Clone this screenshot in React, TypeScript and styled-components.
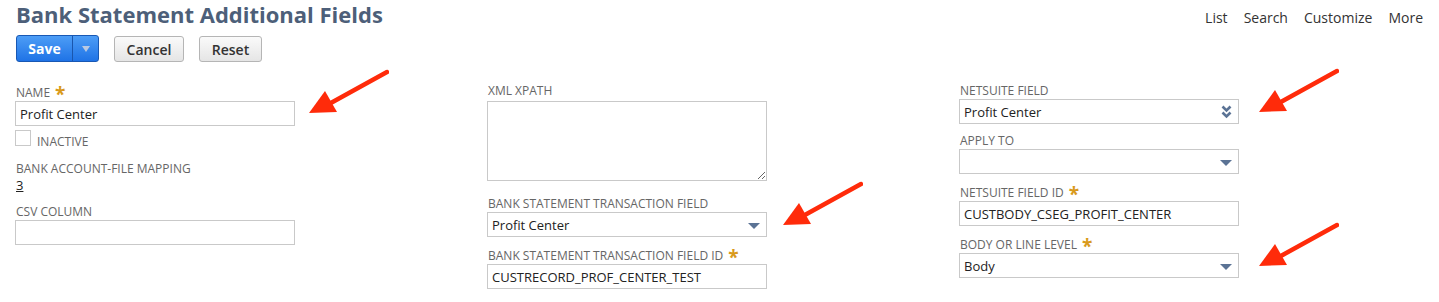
import styled, { createGlobalStyle } from "styled-components";

const GlobalStyle = createGlobalStyle`
  body {
    margin: 0;
    background: #fff;
    font-family: "Open Sans", "Liberation Sans", sans-serif;
    color: #333;
  }
`;

const Page = styled.div`
  position: relative;
  width: 1439px;
  height: 302px;
  padding: 0 16px 0 15px;
  box-sizing: border-box;
  overflow: hidden;
`;

const Header = styled.header`
  display: flex;
  align-items: baseline;
  justify-content: space-between;
  padding-left: 1px;
`;

const Title = styled.h1`
  margin: 0;
  font-size: 22px;
  line-height: 28px;
  font-weight: 700;
  color: #4d5f79;
`;

const TopNav = styled.nav`
  display: flex;
  gap: 16px;
`;

const NavLink = styled.a`
  font-size: 14px;
  color: #333;
  text-decoration: none;
`;

const ButtonBar = styled.div`
  display: flex;
  align-items: flex-start;
  gap: 15px;
  margin-top: 7px;
  padding-left: 1px;
`;

const SaveGroup = styled.div`
  display: flex;
  height: 27px;
  border: 1px solid #1858b4;
  border-radius: 3px;
  box-sizing: border-box;
  overflow: hidden;
  background: linear-gradient(#4d9df6, #1f73e6);
`;

const SaveButton = styled.button`
  width: 55px;
  border: none;
  background: none;
  color: #fff;
  font-family: inherit;
  font-size: 14px;
  font-weight: 700;
  padding: 0;
`;

const SaveMenu = styled.button`
  width: 26px;
  border: none;
  border-left: 1px solid #1a56ad;
  background: none;
  display: flex;
  align-items: center;
  justify-content: center;
  padding: 0;
`;

const MenuCaret = styled.span`
  width: 0;
  height: 0;
  border-left: 4px solid transparent;
  border-right: 4px solid transparent;
  border-top: 6px solid #b9c9e2;
`;

const GrayButton = styled.button<{ $width: number }>`
  width: ${(p) => p.$width}px;
  height: 26px;
  margin-top: 1px;
  border: 1px solid #b5b5b5;
  border-radius: 3px;
  background: linear-gradient(#fafafa, #e5e5e5);
  color: #333;
  font-family: inherit;
  font-size: 14px;
  font-weight: 600;
  padding: 0;
`;

const Form = styled.div`
  display: grid;
  grid-template-columns: 472px 472px 1fr;
  margin-top: 20px;
`;

const Column = styled.div`
  display: flex;
  flex-direction: column;
  align-items: flex-start;
`;

const Field = styled.div<{ $gap?: number }>`
  margin-bottom: ${(p) => p.$gap ?? 8}px;
`;

const Label = styled.div<{ $required?: boolean }>`
  padding: ${(p) => (p.$required ? 2 : 0)}px 0 0 1px;
  font-size: 12px;
  line-height: 17px;
  color: #666;
  text-transform: uppercase;
  white-space: nowrap;
`;

const Star = styled.span`
  margin-left: 5px;
  font-size: 19px;
  font-weight: 700;
  line-height: 0;
  vertical-align: -4px;
  color: #d99a1c;
`;

const TextInput = styled.input`
  display: block;
  width: 280px;
  height: 25px;
  box-sizing: border-box;
  border: 1px solid #c9c9c9;
  padding: 0 4px;
  font-family: inherit;
  font-size: 13px;
  color: #222;
  background: #fff;
  outline: none;
`;

const TextArea = styled.textarea`
  display: block;
  width: 280px;
  height: 80px;
  box-sizing: border-box;
  margin: 2px 0 6px;
  border: 1px solid #c9c9c9;
  padding: 4px;
  font-family: inherit;
  font-size: 13px;
  background: #fff;
  outline: none;
`;

const SelectBox = styled.div`
  display: flex;
  align-items: center;
  justify-content: space-between;
  width: 280px;
  height: 25px;
  box-sizing: border-box;
  border: 1px solid #c9c9c9;
  padding: 0 6px 0 4px;
  font-size: 13px;
  color: #222;
  background: #fff;
`;

const Triangle = styled.span`
  width: 0;
  height: 0;
  border-left: 6px solid transparent;
  border-right: 6px solid transparent;
  border-top: 6px solid #5b7395;
  margin-top: 2px;
`;

const CheckRow = styled.label`
  display: flex;
  align-items: flex-start;
  gap: 6px;
  margin: 4px 0 10px;
`;

const CheckSquare = styled.span`
  width: 16px;
  height: 16px;
  border: 1px solid #c9c9c9;
  box-sizing: border-box;
  background: #fff;
`;

const CheckText = styled.span`
  margin-top: 4px;
  font-size: 12px;
  line-height: 16px;
  color: #666;
`;

const Value = styled.a`
  display: block;
  padding-left: 1px;
  font-size: 13px;
  line-height: 16px;
  color: #222;
  text-decoration: underline;
`;

const ArrowMark = styled.svg<{ $x: number; $y: number }>`
  position: absolute;
  left: ${(p) => p.$x}px;
  top: ${(p) => p.$y}px;
  width: 82px;
  height: 46px;
  pointer-events: none;
`;

const DoubleChevron = () => (
  <svg width="11" height="14" viewBox="0 0 11 14">
    <path d="M1.5 1.5 L5.5 5.5 L9.5 1.5" fill="none" stroke="#5b7395" strokeWidth="2.6" />
    <path d="M1.5 7.5 L5.5 11.5 L9.5 7.5" fill="none" stroke="#5b7395" strokeWidth="2.6" />
  </svg>
);

const Arrow = ({ x, y }: { x: number; y: number }) => (
  <ArrowMark $x={x} $y={y} viewBox="0 0 82 46">
    <line x1="80" y1="3" x2="22" y2="35" stroke="#ff2b0a" strokeWidth="4.5" strokeLinecap="round" />
    <polygon points="2,44 18,22 30,43" fill="#ff2b0a" />
  </ArrowMark>
);

const Select = ({ value, chevrons }: { value?: string; chevrons?: boolean }) => (
  <SelectBox>
    <span>{value}</span>
    {chevrons ? <DoubleChevron /> : <Triangle />}
  </SelectBox>
);

const App: React.FC = () => {
  return (
    <Page>
      <GlobalStyle />
      <Header>
        <Title>Bank Statement Additional Fields</Title>
        <TopNav>
          <NavLink>List</NavLink>
          <NavLink>Search</NavLink>
          <NavLink>Customize</NavLink>
          <NavLink>More</NavLink>
        </TopNav>
      </Header>

      <ButtonBar>
        <SaveGroup>
          <SaveButton>Save</SaveButton>
          <SaveMenu>
            <MenuCaret />
          </SaveMenu>
        </SaveGroup>
        <GrayButton $width={70}>Cancel</GrayButton>
        <GrayButton $width={63}>Reset</GrayButton>
      </ButtonBar>

      <Form>
        <Column>
          <Field $gap={0}>
            <Label $required>
              Name<Star>*</Star>
            </Label>
            <TextInput defaultValue="Profit Center" readOnly />
          </Field>
          <CheckRow>
            <CheckSquare />
            <CheckText>INACTIVE</CheckText>
          </CheckRow>
          <Field $gap={10}>
            <Label>Bank Account-File Mapping</Label>
            <Value>3</Value>
          </Field>
          <Field>
            <Label>CSV Column</Label>
            <TextInput readOnly />
          </Field>
        </Column>

        <Column>
          <Field>
            <Label>XML XPath</Label>
            <TextArea readOnly />
          </Field>
          <Field>
            <Label>Bank Statement Transaction Field</Label>
            <Select value="Profit Center" />
          </Field>
          <Field>
            <Label $required>
              Bank Statement Transaction Field ID<Star>*</Star>
            </Label>
            <TextInput defaultValue="CUSTRECORD_PROF_CENTER_TEST" readOnly />
          </Field>
        </Column>

        <Column>
          <Field>
            <Label>NetSuite Field</Label>
            <Select value="Profit Center" chevrons />
          </Field>
          <Field>
            <Label>Apply To</Label>
            <Select />
          </Field>
          <Field>
            <Label $required>
              NetSuite Field ID<Star>*</Star>
            </Label>
            <TextInput defaultValue="CUSTBODY_CSEG_PROFIT_CENTER" readOnly />
          </Field>
          <Field>
            <Label $required>
              Body or Line Level<Star>*</Star>
            </Label>
            <Select value="Body" />
          </Field>
        </Column>
      </Form>

      <Arrow x={307} y={69} />
      <Arrow x={781} y={181} />
      <Arrow x={1257} y={68} />
      <Arrow x={1257} y={222} />
    </Page>
  );
};

export default App;
